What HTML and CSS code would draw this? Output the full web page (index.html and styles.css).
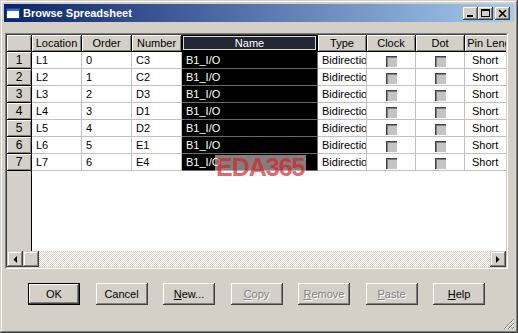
FILE: index.html
```html
<!DOCTYPE html>
<html lang="en">

<head>
  <meta charset="UTF-8">
  <meta name="viewport" content="width=device-width, initial-scale=1.0">
  <title>Browse Spreadsheet</title>
  <link rel="stylesheet" href="styles.css">
</head>

<body>
  <div class="window">
    <!-- Title bar -->
    <div class="titlebar">
      <svg class="app-icon" width="14" height="11" viewBox="0 0 14 11">
        <rect x="0.5" y="0.5" width="13" height="10" fill="#fff" stroke="#1d3f96" />
        <rect x="1" y="1" width="12" height="2" fill="#3b6fd8" />
      </svg>
      <span class="title">Browse Spreadsheet</span>
      <div class="caption-btns">
        <span class="cap-btn">
          <svg width="15" height="13" viewBox="0 0 15 13">
            <rect x="4" y="8" width="6" height="2" fill="#000" />
          </svg>
        </span>
        <span class="cap-btn">
          <svg width="15" height="13" viewBox="0 0 15 13">
            <rect x="3.5" y="2.5" width="8" height="7" fill="none" stroke="#000" />
            <rect x="3" y="2" width="9" height="2" fill="#000" />
          </svg>
        </span>
        <span class="cap-btn close">
          <svg width="15" height="13" viewBox="0 0 15 13">
            <path d="M4 3L11 10M11 3L4 10" stroke="#000" stroke-width="1.7" />
          </svg>
        </span>
      </div>
    </div>

    <div class="client">
      <!-- Spreadsheet -->
      <div class="sheet">
        <div class="sheet-body">
          <div class="sheet-view">
            <table class="grid">
              <colgroup>
                <col class="c-row">
                <col class="c-std">
                <col class="c-std">
                <col class="c-std">
                <col class="c-name">
                <col class="c-mid">
                <col class="c-mid">
                <col class="c-mid">
                <col class="c-len">
              </colgroup>
              <thead>
                <tr>
                  <th></th>
                  <th>Location</th>
                  <th>Order</th>
                  <th>Number</th>
                  <th class="selected">Name</th>
                  <th>Type</th>
                  <th>Clock</th>
                  <th>Dot</th>
                  <th>Pin Length</th>
                </tr>
              </thead>
              <tbody>
                <tr>
                  <th>1</th><td>L1</td><td>0</td><td>C3</td><td class="name">B1_I/O</td><td>Bidirectional</td>
                  <td class="check-cell"><span class="check"></span></td><td class="check-cell"><span class="check"></span></td><td class="len">Short</td>
                </tr>
                <tr>
                  <th>2</th><td>L2</td><td>1</td><td>C2</td><td class="name">B1_I/O</td><td>Bidirectional</td>
                  <td class="check-cell"><span class="check"></span></td><td class="check-cell"><span class="check"></span></td><td class="len">Short</td>
                </tr>
                <tr>
                  <th>3</th><td>L3</td><td>2</td><td>D3</td><td class="name">B1_I/O</td><td>Bidirectional</td>
                  <td class="check-cell"><span class="check"></span></td><td class="check-cell"><span class="check"></span></td><td class="len">Short</td>
                </tr>
                <tr>
                  <th>4</th><td>L4</td><td>3</td><td>D1</td><td class="name">B1_I/O</td><td>Bidirectional</td>
                  <td class="check-cell"><span class="check"></span></td><td class="check-cell"><span class="check"></span></td><td class="len">Short</td>
                </tr>
                <tr>
                  <th>5</th><td>L5</td><td>4</td><td>D2</td><td class="name">B1_I/O</td><td>Bidirectional</td>
                  <td class="check-cell"><span class="check"></span></td><td class="check-cell"><span class="check"></span></td><td class="len">Short</td>
                </tr>
                <tr>
                  <th>6</th><td>L6</td><td>5</td><td>E1</td><td class="name">B1_I/O</td><td>Bidirectional</td>
                  <td class="check-cell"><span class="check"></span></td><td class="check-cell"><span class="check"></span></td><td class="len">Short</td>
                </tr>
                <tr>
                  <th>7</th><td>L7</td><td>6</td><td>E4</td><td class="name">B1_I/O</td><td>Bidirectional</td>
                  <td class="check-cell"><span class="check"></span></td><td class="check-cell"><span class="check"></span></td><td class="len">Short</td>
                </tr>
              </tbody>
            </table>
            <div class="watermark">EDA365</div>
          </div>

          <!-- Horizontal scrollbar -->
          <div class="hscroll">
            <span class="sb-btn">
              <svg width="4" height="7" viewBox="0 0 4 7"><polygon points="4,0 4,7 0.5,3.5" fill="#000" /></svg>
            </span>
            <span class="sb-btn"></span>
            <span class="sb-track"></span>
            <span class="sb-btn">
              <svg width="4" height="7" viewBox="0 0 4 7"><polygon points="0,0 0,7 3.5,3.5" fill="#000" /></svg>
            </span>
          </div>
        </div>
      </div>

      <!-- Dialog buttons -->
      <div class="actions">
        <button class="btn default">OK</button>
        <button class="btn">Cancel</button>
        <button class="btn"><u>N</u>ew...</button>
        <button class="btn" disabled><u>C</u>opy</button>
        <button class="btn" disabled><u>R</u>emove</button>
        <button class="btn" disabled><u>P</u>aste</button>
        <button class="btn"><u>H</u>elp</button>
      </div>
    </div>

    <svg class="grip" width="12" height="12" viewBox="0 0 12 12">
      <path d="M11 1L1 11M11 5L5 11M11 9L9 11" stroke="#808080" stroke-width="1" />
      <path d="M11 2L2 11M11 6L6 11M11 10L10 11" stroke="#fff" stroke-width="1" />
    </svg>
  </div>
</body>

</html>
```

FILE: styles.css
```css
body {
  margin: 0;
  font-family: "Liberation Sans", Arial, sans-serif;
  font-size: 11px;
}

.window {
  position: relative;
  width: 518px;
  height: 333px;
  box-sizing: border-box;
  padding: 4px;
  background: #d4d0c8;
  display: flex;
  flex-direction: column;
  box-shadow: inset -1px -1px #404040, inset 1px 1px #d4d0c8, inset -2px -2px #808080, inset 2px 2px #fff;
}

/* Title bar */
.titlebar {
  height: 18px;
  display: flex;
  align-items: center;
  padding: 0 4px 0 2px;
  background: linear-gradient(to right, #0a246a, #a6caf0);
}

.app-icon {
  display: block;
  margin-right: 3px;
}

.title {
  color: #fff;
  font-weight: bold;
  font-size: 11px;
}

.caption-btns {
  margin-left: auto;
  display: flex;
}

.cap-btn {
  width: 15px;
  height: 13px;
  background: #d4d0c8;
  box-shadow: inset -1px -1px #404040, inset 1px 1px #fff, inset -2px -2px #808080;
}

.cap-btn svg {
  display: block;
}

.cap-btn.close {
  margin-left: 2px;
}

/* Client area */
.client {
  flex: 1;
  display: flex;
  flex-direction: column;
  padding: 11px 6px 0 1px;
}

.sheet {
  height: 236px;
  box-sizing: border-box;
  border: 1px solid;
  border-color: #808080 #fff #fff #808080;
}

.sheet-body {
  height: 100%;
  box-sizing: border-box;
  border: 1px solid;
  border-color: #404040 #d4d0c8 #d4d0c8 #404040;
  display: flex;
  flex-direction: column;
}

.sheet-view {
  flex: 1;
  position: relative;
  overflow: hidden;
  background: linear-gradient(to right, #d4d0c8 0 24px, #000 24px 25px, #fff 25px);
}

.grid {
  border-collapse: separate;
  border-spacing: 0;
  table-layout: fixed;
  width: 516px;
  font-size: 11px;
}

.c-row { width: 25px; }
.c-std { width: 50px; }
.c-name { width: 136px; }
.c-mid { width: 49px; }
.c-len { width: 58px; }

.grid th,
.grid td {
  height: 16px;
  padding: 0 4px;
  line-height: 16px;
  white-space: nowrap;
  overflow: hidden;
}

.grid th {
  padding: 0;
  font-weight: normal;
  text-align: center;
  background: #d4d0c8;
  border-right: 1px solid #000;
  border-bottom: 1px solid #000;
  box-shadow: inset 1px 1px #fff, inset -1px -1px #808080;
}

.grid th.selected {
  background: #232834;
  color: #fff;
  box-shadow: inset 1px 1px #000, inset -1px -1px #000, inset 2px 2px #d8d8d8, inset -2px -2px #d8d8d8;
}

.grid tbody th {
  font-size: 12px;
}

.grid td {
  text-align: left;
  background: #fff;
  border-right: 1px solid #c0c0c0;
  border-bottom: 1px solid #c0c0c0;
}

.grid td.name {
  background: #000;
  color: #fff;
  border-color: #6a6a6a;
}

.grid td.len {
  padding-left: 7px;
}

.grid td.check-cell {
  padding: 0;
  text-align: center;
}

.check {
  display: inline-block;
  width: 11px;
  height: 11px;
  vertical-align: middle;
  background: #c4c4c4;
  box-shadow: inset 1px 1px #404040, inset 2px 2px #808080;
}

.watermark {
  position: absolute;
  left: 208px;
  top: 120px;
  padding: 0 1px;
  font-size: 25px;
  font-weight: bold;
  line-height: 24px;
  letter-spacing: -1px;
  color: rgba(220, 30, 40, 0.7);
  background: rgba(255, 255, 255, 0.5);
}

/* Scrollbar */
.hscroll {
  height: 16px;
  display: flex;
}

.sb-btn {
  width: 16px;
  height: 16px;
  box-sizing: border-box;
  display: flex;
  align-items: center;
  justify-content: center;
  background: #d4d0c8;
  box-shadow: inset -1px -1px #404040, inset 1px 1px #d4d0c8, inset -2px -2px #808080, inset 2px 2px #fff;
}

.sb-track {
  flex: 1;
  background: repeating-conic-gradient(#fff 0 25%, #d4d0c8 0 50%) 0 0 / 2px 2px;
}

/* Dialog buttons */
.actions {
  display: flex;
  gap: 15.5px;
  padding-left: 23px;
  margin-top: 14px;
}

.btn {
  width: 52px;
  height: 22px;
  box-sizing: border-box;
  padding: 0;
  border: none;
  font-family: "Liberation Sans", Arial, sans-serif;
  font-size: 11px;
  color: #000;
  background: #d4d0c8;
  box-shadow: inset -1px -1px #404040, inset 1px 1px #fff, inset -2px -2px #808080, inset 2px 2px #d4d0c8;
}

.btn.default {
  border: 1px solid #000;
}

.btn:disabled {
  color: #808080;
  text-shadow: 1px 1px #fff;
}

.grip {
  position: absolute;
  right: 3px;
  bottom: 3px;
}
```
